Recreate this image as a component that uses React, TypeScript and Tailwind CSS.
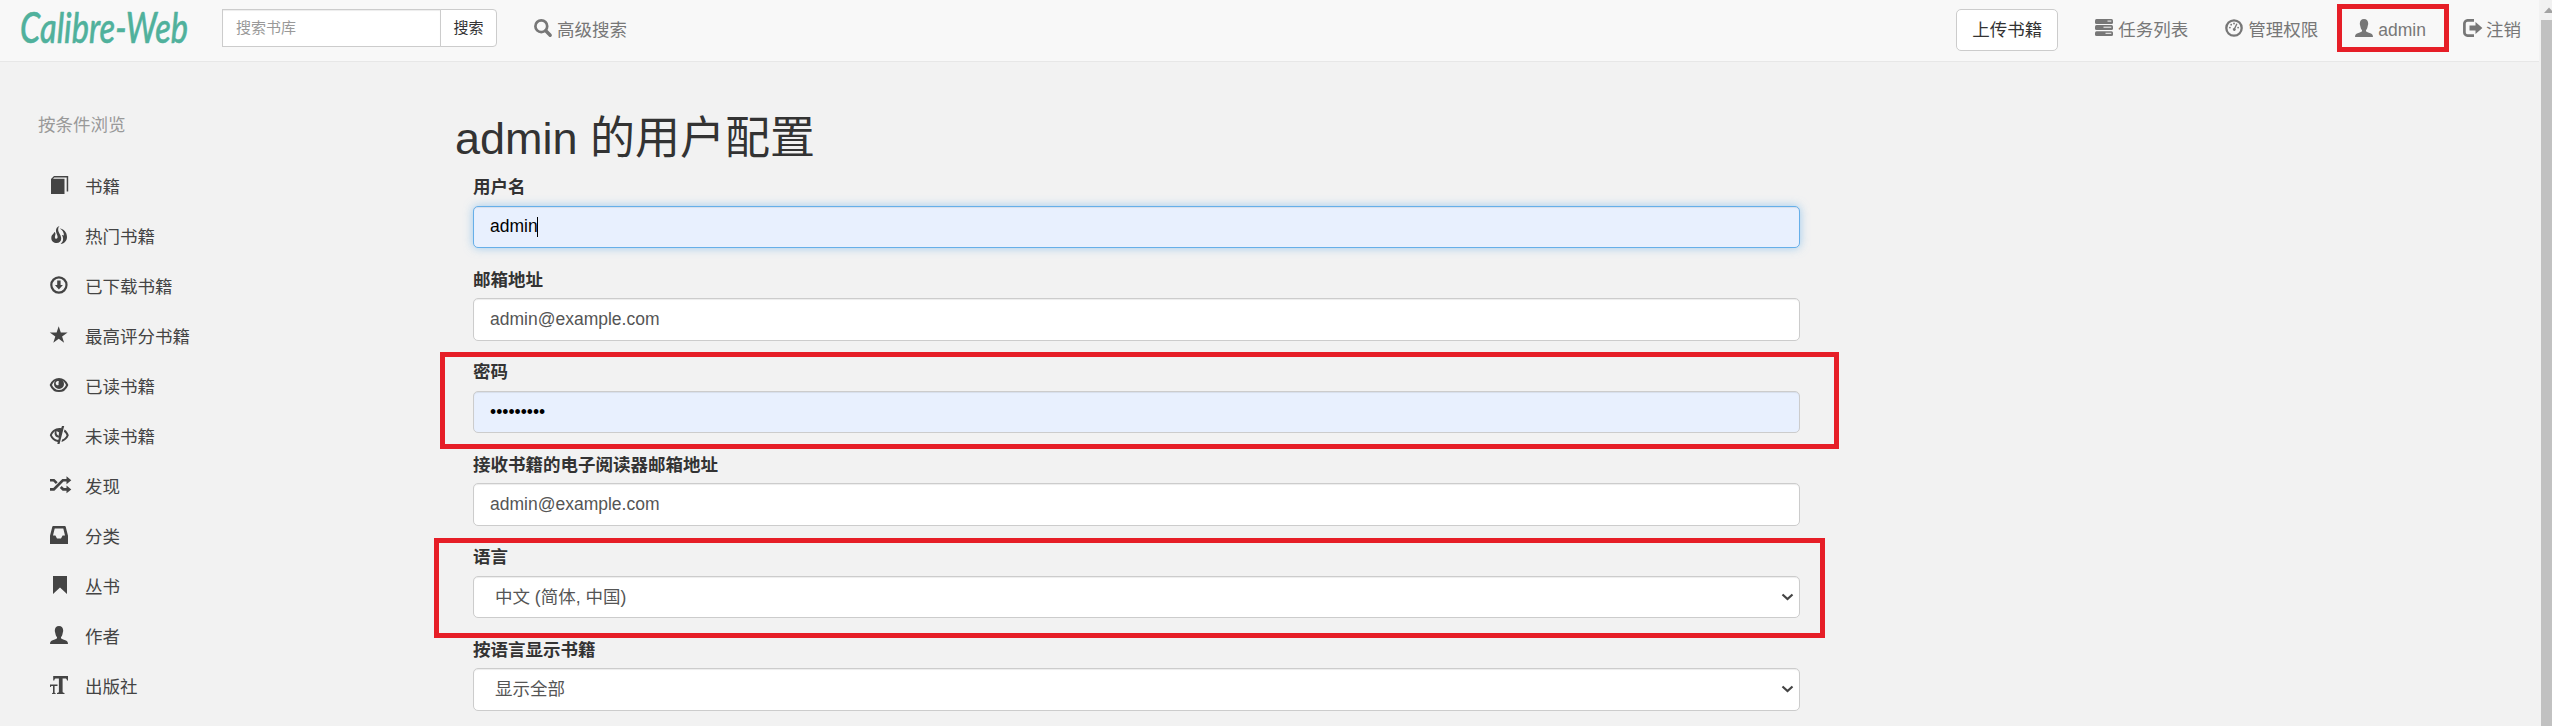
import React from "react";

type IconProps = { className?: string };

function Icon({ className = "", width = 22, children }: { className?: string; width?: number; children: React.ReactNode }) {
  return (
    <svg className={"shrink-0 overflow-visible " + className} width={width} height={18} viewBox={`0 0 ${width} 18`} fill="currentColor">
      {children}
    </svg>
  );
}

const UserShape = () => (
  <path d="M9 0C6.3 0 4.8 2 4.8 4.6c0 1 .2 1.7.5 2.3C5.500 8.800 6.200 10.200 7 11v1.300C6.500 13 4.500 13.500 2.700 14.300.9 15.100.100 15.700 0 18h18c-.1-2.300-.9-2.900-2.700-3.700-1.800-.8-3.800-1.300-4.300-2V11c.8-.8 1.500-2.200 1.700-4.100.3-.6.5-1.300.5-2.300C13.200 2 11.700 0 9 0z" />
);

const BookIcon = () => (
  <Icon>
    <path d="M4 0h14.200v15.500h-1.500V1.500H4.300L3 2.800h11.500V18H1V3z" />
  </Icon>
);
const FireIcon = () => (
  <Icon>
    <path d="M9.600 0C7 .8 5.600 3 6 5.600c.3 2 1.600 3.700 1.600 5.500 0 1.100-.6 1.700-1.300 1.700-1 0-1.500-.9-1.400-2.100.1-1 .6-1.700.6-2.700C5.500 7 5 6.300 4.200 6.100c-.2 2-2.900 2.600-2.900 5.900 0 3.300 2.500 5 5.300 5 2.700 0 4.600-1.700 4.600-4.500 0-3.600-2.600-5.400-3-8.300C8 2.500 8.500 1 9.600 0z" />
    <path d="M9.800 2.600c3.600.6 7.200 3.400 7.200 8.400 0 3.500-2.200 6.400-6.400 7 1.600-1.300 2.500-3 2.500-4.900 0-1.500-.4-2.700-1-3.900.5-.3 1.400-.1 1.800.5.3-3-1.500-5.700-4.100-7.100z" />
  </Icon>
);
const DownloadIcon = () => (
  <Icon>
    <circle cx="8.900" cy="9" r="7.600" fill="none" stroke="currentColor" strokeWidth="2.200" />
    <path d="M7.200 4.400h3.400v4.500h2.300L8.900 13.400 4.900 8.900h2.300z" />
  </Icon>
);
const StarIcon = () => (
  <Icon>
    <path d="M8.700.300l2.100 6.200h6.800l-5.500 3.900 2 6.300-5.400-3.900-5.400 3.900 2-6.300L-.2 6.500h6.800z" />
  </Icon>
);
const EyeIcon = () => (
  <Icon>
    <path d="M.8 9C2.300 5.400 5.300 2.900 9 2.900S15.700 5.400 17.200 9c-1.500 3.600-4.500 6.100-8.200 6.100S2.300 12.600.8 9z" fill="none" stroke="currentColor" strokeWidth="2" />
    <path fillRule="evenodd" d="M9 3a5 5 0 0 1 5 5 5 5 0 0 1-10 0 5 5 0 0 1 5-5zM7.200 5.200a2 2 0 0 0-1.500 2.300c.2 1.300 1.300 2 2.500 1.700.9-.2.2-1.300.3-2.100.1-.7.6-1 .3-1.500-.3-.5-1-.6-1.600-.4z" />
  </Icon>
);
const EyeCloseIcon = () => (
  <Icon>
    <path
      fillRule="evenodd"
      d="M12 0h2.200L9.500 18H7.300l.5-2C4 15.300 1.200 12.800-.2 9.200 1.300 5 5 2 9.300 2c.7 0 1.300.1 1.900.2zM8.300 13.900l.6-2.200c-2.600-.2-4.300-1.900-4.300-4.200 0-1 .2-1.800.7-2.600C3.600 6 2.500 7.500 1.900 9.200c1.200 2.700 3.500 4.400 6.400 4.700zM9 6.200C8 5.900 6.600 5 6.600 5c-.5 2 .3 4.200 2.100 4.700z"
    />
    <path d="M14.600 3.400c1.900 1.300 3.400 3.400 4.200 5.800-1.300 3.400-4 6-7.300 6.700l.6-2.300c2-.8 3.600-2.400 4.500-4.400-.6-1.400-1.500-2.600-2.700-3.500z" />
  </Icon>
);
const RandomIcon = () => (
  <Icon>
    <path d="M0 2.900h4.400l3.300 3.300-1.900 1.900-2.500-2.500H0zM0 12h3.300l9-9.100h4.200V.300l4.800 3.900-4.800 4V5.600h-3L4.400 14.700H0zM9.800 11.900l1.900-1.900 2.100 2h2.700V9.400l4.800 4-4.800 3.900v-2.600h-3.900z" />
  </Icon>
);
const InboxIcon = () => (
  <Icon>
    <path fillRule="evenodd" d="M3.200 0h11.600c.5 0 .8.300.9.700L18 9.800V18H0V9.800L2.300.700c.1-.4.4-.7.9-.7zM4.700 2.400L3 9.500h2.400l1.600 3h4l1.600-3H15l-1.700-7.100z" />
  </Icon>
);
const BookmarkIcon = () => (
  <Icon>
    <path d="M3 0h14v18l-7-6.500L3 18z" />
  </Icon>
);
const PersonIcon = () => (
  <Icon>
    <UserShape />
  </Icon>
);
const TextSizeIcon = () => (
  <Icon>
    <path d="M3.200 0H18v4.600h-1c-.1-1.500-.7-2.100-2-2.100h-2.400V15.500c0 1 .6 1.400 1.900 1.500v1H7v-1c1.300-.1 1.900-.5 1.900-1.500V2.500H6.300c-1.300 0-1.900.6-2 2.100H3.200z" />
    <path d="M0 8.400h7.500v1.500H4.600v6.500c0 .5.400.8 1.100.8v.8H2v-.8c.7 0 1-.3 1-.8V9.900H1.800c-.6 0-.9.300-1 1.100H0z" />
  </Icon>
);

const SearchIcon = ({ className }: IconProps) => (
  <Icon width={18} className={className}>
    <circle cx="7.300" cy="7.200" r="5.900" fill="none" stroke="currentColor" strokeWidth="2.700" />
    <path d="M11.800 11.700l4.400 4.600" stroke="currentColor" strokeWidth="3.400" strokeLinecap="round" />
  </Icon>
);
const TasksIcon = () => (
  <Icon width={18}>
    <rect x="0" y="0" width="18" height="4.900" rx="1.500" />
    <rect x="0" y="6.100" width="18" height="4.900" rx="1.500" />
    <rect x="0" y="12.200" width="18" height="4.900" rx="1.500" />
    <path d="M12.500 2.100h3.800M8.500 8.200h7.800M10.500 14.300h5.800" stroke="#f8f8f8" strokeWidth="1" />
  </Icon>
);
const DashboardIcon = () => (
  <Icon width={18}>
    <circle cx="9" cy="9" r="7.700" fill="none" stroke="currentColor" strokeWidth="2.300" />
    <circle cx="4.900" cy="8.600" r=".9" />
    <circle cx="6.200" cy="5.700" r=".9" />
    <circle cx="9" cy="4.500" r=".9" />
    <circle cx="13.100" cy="8.600" r=".9" />
    <path d="M11.300 4.400l1.200.6-2.100 4.400a1.500 1.500 0 1 1-1.300-.5z" />
  </Icon>
);
const NavUserIcon = () => (
  <Icon width={18}>
    <UserShape />
  </Icon>
);
const LogoutIcon = () => (
  <Icon width={19}>
    <path d="M11 1.400H4.500A3.200 3.200 0 0 0 1.400 4.600v8.800a3.200 3.200 0 0 0 3.100 3.200H11" fill="none" stroke="currentColor" strokeWidth="2.700" />
    <path d="M6.500 6.500h6V3l6.900 6-6.900 6v-3.500h-6z" />
  </Icon>
);

const sidebar: { label: string; icon: () => React.JSX.Element }[] = [
  { label: "书籍", icon: BookIcon },
  { label: "热门书籍", icon: FireIcon },
  { label: "已下载书籍", icon: DownloadIcon },
  { label: "最高评分书籍", icon: StarIcon },
  { label: "已读书籍", icon: EyeIcon },
  { label: "未读书籍", icon: EyeCloseIcon },
  { label: "发现", icon: RandomIcon },
  { label: "分类", icon: InboxIcon },
  { label: "丛书", icon: BookmarkIcon },
  { label: "作者", icon: PersonIcon },
  { label: "出版社", icon: TextSizeIcon },
];

const control = "flex h-[42.5px] w-full items-center rounded-[5px] border px-[16px]";
const plain = "border-[#ccc] shadow-[inset_0_1px_1px_rgba(0,0,0,0.075)]";

function Field({ label, children }: { label: string; children: React.ReactNode }) {
  return (
    <div className="mb-[18.500px] flex h-[74px] flex-col justify-between">
      <label className="h-[25px] font-bold leading-[26px] text-[#333]">{label}</label>
      {children}
    </div>
  );
}

function Select({ value }: { value: string }) {
  return (
    <div className={`${control} ${plain} justify-between bg-white pl-[21px] pr-[5px] text-[#555]`}>
      <span className="pt-px">{value}</span>
      <svg width="13" height="8" viewBox="0 0 13 8" fill="none" stroke="#444" strokeWidth="2.200">
        <path d="M1.500 1.500l5 4.600 5-4.600" />
      </svg>
    </div>
  );
}

function Navbar() {
  return (
    <header className="flex h-[62px] w-[2539px] shrink-0 items-start border-b border-[#e7e7e7] bg-[#f8f8f8] pl-[20px] text-[#777]">
      <svg className="mt-[4px] shrink-0 overflow-visible" width="169" height="48" viewBox="0 0 169 48">
        <text
          x="0"
          y="39"
          textLength="168"
          lengthAdjust="spacingAndGlyphs"
          strokeWidth=".5"
          strokeLinejoin="round"
          className="fill-[#50b19c] stroke-[#50b19c] font-['Lato','Liberation_Sans',sans-serif] text-[43px] font-medium italic"
        >
          Calibre-Web
        </text>
      </svg>
      <div className="ml-[33px] mt-[9px] flex h-[38px] text-[15px]">
        <div className="flex w-[219px] items-center border border-[#ccc] bg-white pl-[13px] pb-px text-[#999] shadow-[inset_0_1px_1px_rgba(0,0,0,0.075)]">
          搜索书库
        </div>
        <div className="-ml-px flex w-[57px] items-center justify-center rounded-r-[4px] border border-[#ccc] bg-white pb-px text-[#333]">搜索</div>
      </div>
      <div className="ml-[37px] mt-[19px] flex h-[18px] items-center gap-[5px]">
        <SearchIcon />
        <span className="mt-[5px]">高级搜索</span>
      </div>
      <div className="ml-auto flex">
        <div className="mt-[9px] flex h-[42px] w-[102px] items-center justify-center rounded-[5px] border border-[#ccc] bg-white text-[#333]">
          上传书籍
        </div>
        <div className="ml-[37px] mt-[19px] flex h-[18px] items-center gap-[5px]">
          <TasksIcon />
          <span className="mt-[5px]">任务列表</span>
        </div>
        <div className="ml-[37px] mt-[19px] flex h-[18px] items-center gap-[5px]">
          <DashboardIcon />
          <span className="mt-[5px]">管理权限</span>
        </div>
        <div className="relative ml-[37px] mt-[19px] flex h-[18px] items-center gap-[5px]">
          <NavUserIcon />
          <span className="mt-[4px]">admin</span>
          <div className="absolute -left-[18px] -top-[15px] h-[48px] w-[112px] border-[5px] border-[#e61e27]" />
        </div>
        <div className="ml-[37px] mr-[18px] mt-[19px] flex h-[18px] items-center gap-[4px]">
          <LogoutIcon />
          <span className="mt-[5px]">注销</span>
        </div>
      </div>
    </header>
  );
}

export default function App() {
  return (
    <div className="flex h-[726px] w-[2552px] overflow-hidden bg-[#f2f2f2] font-['Liberation_Sans','Noto_Sans_CJK_SC',sans-serif] text-[17.5px] leading-[25px]">
      <div className="flex w-[2541px] shrink-0 flex-col">
        <Navbar />
        <div className="flex">
          <aside className="w-[455px] shrink-0 text-[#444]">
            <div className="ml-[38px] mt-[51px] text-[#999]">按条件浏览</div>
            <nav className="mt-[23px] pl-[50px]">
              {sidebar.map(({ label, icon: Glyph }) => (
                <div key={label} className="flex h-[50px] items-center gap-[13px]">
                  <span className="flex pb-[2px]">
                    <Glyph />
                  </span>
                  <span className="pt-[3px]">{label}</span>
                </div>
              ))}
            </nav>
          </aside>
          <main className="w-[1345px] shrink-0">
            <h1 className="mt-[52px] h-[50px] text-[45px] font-normal leading-[50px] text-[#333]">admin 的用户配置</h1>
            <form className="mt-[10px] pl-[18px]">
              <Field label="用户名">
                <div className={`${control} border-[#66afe9] bg-[#e8f0fe] text-black shadow-[inset_0_1px_1px_rgba(0,0,0,0.075),0_0_10px_rgba(102,175,233,0.6)]`}>
                  admin
                  <span className="-ml-px h-[20px] w-px bg-black" />
                </div>
              </Field>
              <Field label="邮箱地址">
                <div className={`${control} ${plain} bg-white text-[#555]`}>admin@example.com</div>
              </Field>
              <div className="relative">
                <Field label="密码">
                  <div className={`${control} ${plain} bg-[#e8f0fe] pt-[2px] text-black`}>•••••••••</div>
                </Field>
                <div className="absolute -left-[33px] -top-[7px] h-[97px] w-[1399px] border-[5px] border-[#e61e27]" />
              </div>
              <Field label="接收书籍的电子阅读器邮箱地址">
                <div className={`${control} ${plain} bg-white text-[#555]`}>admin@example.com</div>
              </Field>
              <div className="relative">
                <Field label="语言">
                  <Select value="中文 (简体, 中国)" />
                </Field>
                <div className="absolute -left-[39px] -top-[6px] h-[100px] w-[1391px] border-[5px] border-[#e61e27]" />
              </div>
              <Field label="按语言显示书籍">
                <Select value="显示全部" />
              </Field>
            </form>
          </main>
        </div>
      </div>
      <div className="flex w-[11px] flex-col bg-[#f1f1f1]">
        <svg width="11" height="20" viewBox="0 0 11 20" fill="#a3a3a3">
          <path d="M3 13h10L8 7.500z" />
        </svg>
        <div className="grow bg-[#c1c1c1]" />
      </div>
    </div>
  );
}
